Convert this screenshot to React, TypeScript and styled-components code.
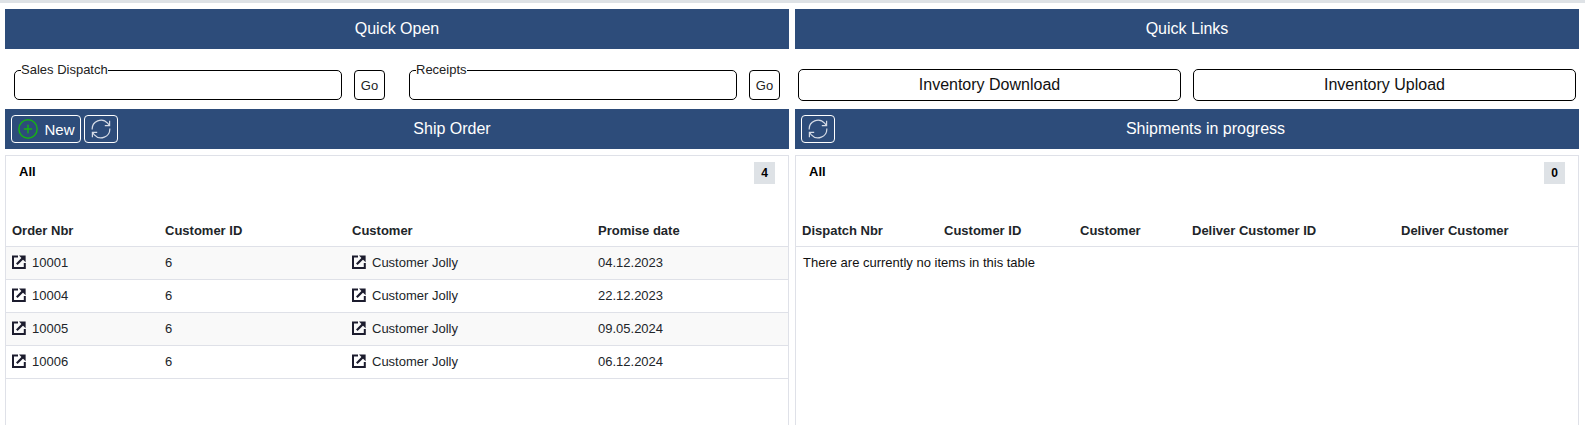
import styled, { createGlobalStyle } from "styled-components";
import { CirclePlus } from "lucide-react";

const orderRows = [
  { nbr: "10001", id: "6", customer: "Customer Jolly", date: "04.12.2023" },
  { nbr: "10004", id: "6", customer: "Customer Jolly", date: "22.12.2023" },
  { nbr: "10005", id: "6", customer: "Customer Jolly", date: "09.05.2024" },
  { nbr: "10006", id: "6", customer: "Customer Jolly", date: "06.12.2024" },
];

const orderColumns = "153px 187px 246px 1fr";
const shipColumns = "142px 136px 112px 209px 1fr";

function RefreshIcon() {
  return (
    <svg width="22" height="22" viewBox="0 0 22 22" fill="none" stroke="#d5dbe6" strokeWidth="1.2">
      <path d="M2.2 11.5A8.8 8.8 0 0 1 17.6 5.2L19.4 7.4" />
      <path d="M19.8 10.5A8.8 8.8 0 0 1 4.4 16.8L2.6 14.6" />
      <path d="M19.6 2.8V7.6H14.8" />
      <path d="M2.4 19.2V14.4H7.2" />
    </svg>
  );
}

function LinkIcon() {
  return (
    <LinkSvg width="14" height="14" viewBox="0 0 14 14" fill="none" stroke="#1c1c2e" strokeWidth="2">
      <path d="M6 1.5H1V13H12.8V8" />
      <path d="M4.8 9.2L11.4 2.6" strokeWidth="2.2" />
      <path d="M7 0.6H13.6V7.2Z" fill="#1c1c2e" stroke="none" />
    </LinkSvg>
  );
}

function QuickField({ label }: { label: string }) {
  return (
    <>
      <FieldBox>
        <legend>{label}</legend>
        <input type="text" aria-label={label} />
      </FieldBox>
      <GoButton>Go</GoButton>
    </>
  );
}

export default function App() {
  return (
    <>
      <GlobalStyle />
      <TopStrip />
      <Page>
        <Column>
          <TitleBar>
            <Title>Quick Open</Title>
          </TitleBar>
          <QuickRow>
            <QuickField label="Sales Dispatch" />
            <QuickField label="Receipts" />
          </QuickRow>
          <TitleBar>
            <BarTools>
              <NewButton>
                <CirclePlus size={22} color="#17b017" strokeWidth={1.6} />
                New
              </NewButton>
              <IconButton>
                <RefreshIcon />
              </IconButton>
            </BarTools>
            <Title>Ship Order</Title>
          </TitleBar>
          <Panel>
            <PanelHead>
              <b>All</b>
              <Badge>4</Badge>
            </PanelHead>
            <HeadRow $columns={orderColumns}>
              <div>Order Nbr</div>
              <div>Customer ID</div>
              <div>Customer</div>
              <div>Promise date</div>
            </HeadRow>
            {orderRows.map((row, i) => (
              <Row key={row.nbr} $columns={orderColumns} $striped={i % 2 === 0}>
                <div>
                  <LinkIcon />
                  {row.nbr}
                </div>
                <div>{row.id}</div>
                <div>
                  <LinkIcon />
                  {row.customer}
                </div>
                <div>{row.date}</div>
              </Row>
            ))}
          </Panel>
        </Column>
        <Column>
          <TitleBar>
            <Title>Quick Links</Title>
          </TitleBar>
          <LinksRow>
            <LinkButton>Inventory Download</LinkButton>
            <LinkButton>Inventory Upload</LinkButton>
          </LinksRow>
          <TitleBar>
            <BarTools>
              <IconButton>
                <RefreshIcon />
              </IconButton>
            </BarTools>
            <Title>Shipments in progress</Title>
          </TitleBar>
          <Panel>
            <PanelHead>
              <b>All</b>
              <Badge>0</Badge>
            </PanelHead>
            <HeadRow $columns={shipColumns}>
              <div>Dispatch Nbr</div>
              <div>Customer ID</div>
              <div>Customer</div>
              <div>Deliver Customer ID</div>
              <div>Deliver Customer</div>
            </HeadRow>
            <EmptyText>There are currently no items in this table</EmptyText>
          </Panel>
        </Column>
      </Page>
    </>
  );
}

const GlobalStyle = createGlobalStyle`
  html, body {
    margin: 0;
    height: 100%;
    overflow: hidden;
    background: #fff;
    font-family: "Liberation Sans", Arial, sans-serif;
  }
`;

const TopStrip = styled.div`
  height: 3px;
  background: #dee2e6;
`;

const Page = styled.div`
  display: grid;
  grid-template-columns: 784px 784px;
  column-gap: 6px;
  padding: 6px 6px 0 5px;
`;

const Column = styled.div`
  display: flex;
  flex-direction: column;
  min-width: 0;
`;

const TitleBar = styled.div`
  height: 40px;
  display: flex;
  align-items: center;
  background: #2d4c7a;
  color: #fff;
  font-size: 16px;
`;

const Title = styled.div`
  flex: 1;
  text-align: center;
`;

const BarTools = styled.div`
  display: flex;
  gap: 3px;
  padding-left: 6px;
  margin-right: -3px;
`;

const BarButton = styled.button`
  height: 28px;
  box-sizing: border-box;
  display: flex;
  align-items: center;
  justify-content: center;
  padding: 0;
  border: 1px solid #fff;
  border-radius: 4px;
  background: transparent;
  color: #fff;
  font: 15px "Liberation Sans", Arial, sans-serif;
`;

const NewButton = styled(BarButton)`
  width: 70px;
  gap: 5px;
`;

const IconButton = styled(BarButton)`
  width: 34px;
`;

const QuickRow = styled.div`
  height: 60px;
  box-sizing: border-box;
  display: flex;
  align-items: flex-start;
  padding: 14px 9px 0;
`;

const FieldBox = styled.fieldset`
  width: 328px;
  height: 37px;
  box-sizing: border-box;
  margin: 0 12px 0 0;
  padding: 0 6px;
  border: 1px solid #000;
  border-radius: 5px;

  legend {
    padding: 0;
    font-size: 13px;
    line-height: 14px;
    color: #222;
  }

  input {
    width: 100%;
    border: 0;
    outline: 0;
    padding: 0;
    background: transparent;
  }
`;

const GoButton = styled.button`
  width: 31px;
  height: 30px;
  margin: 7px 24px 0 0;
  padding: 0;
  box-sizing: border-box;
  border: 1px solid #000;
  border-radius: 4px;
  background: #fff;
  color: #222;
  font: 13px "Liberation Sans", Arial, sans-serif;

  &:last-child {
    margin-right: 0;
  }
`;

const LinksRow = styled.div`
  height: 60px;
  box-sizing: border-box;
  display: grid;
  grid-template-columns: 383px 383px;
  column-gap: 12px;
  padding: 20px 0 0 3px;
`;

const LinkButton = styled.button`
  height: 32px;
  padding: 0;
  border: 1px solid #000;
  border-radius: 5px;
  background: #fff;
  color: #111;
  font: 16px "Liberation Sans", Arial, sans-serif;
`;

const Panel = styled.div`
  height: 270px;
  margin-top: 6px;
  box-sizing: border-box;
  border: 1px solid #dfe1e8;
  border-bottom: 0;
  font-size: 13px;
  color: #212529;
`;

const PanelHead = styled.div`
  height: 60px;
  box-sizing: border-box;
  display: flex;
  justify-content: space-between;
  align-items: flex-start;
  padding: 6px 13px 0 13px;

  b {
    margin-top: 2px;
    font-size: 13px;
    color: #000;
  }
`;

const Badge = styled.span`
  width: 21px;
  height: 22px;
  display: flex;
  align-items: center;
  justify-content: center;
  background: #dee2e6;
  color: #000;
  font-size: 12px;
  font-weight: bold;
`;

const Row = styled.div<{ $columns: string; $striped?: boolean }>`
  display: grid;
  grid-template-columns: ${(p) => p.$columns};
  align-items: center;
  height: 33px;
  box-sizing: border-box;
  padding: 0 0 2px 6px;
  border-bottom: 1px solid #dfe1e8;
  background: ${(p) => (p.$striped ? "#f9f9f9" : "#fff")};

  > div {
    display: flex;
    align-items: center;
  }
`;

const HeadRow = styled(Row)`
  height: 31px;
  font-weight: bold;
  align-items: flex-start;
  padding-top: 7px;
`;

const LinkSvg = styled.svg`
  margin-right: 6px;
  flex-shrink: 0;
`;

const EmptyText = styled.div`
  padding: 8px 7px;
  color: #111;
`;
